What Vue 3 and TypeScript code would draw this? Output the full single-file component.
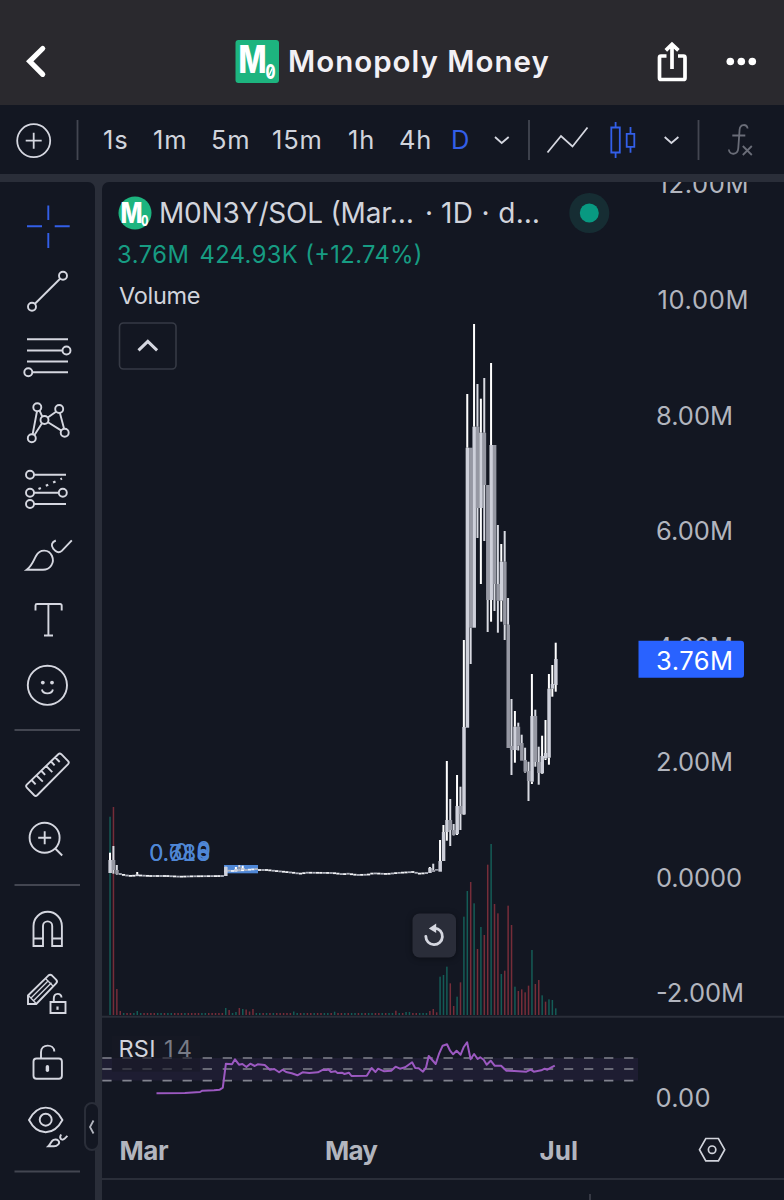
<script setup lang="ts">
type Candle = [index: number, high: number, low: number, top: number, bottom: number, up: 0 | 1]

const STEP = 3.4024
const barX = (i: number): number => 110 + i * STEP

const intervals: string[] = ['1s', '1m', '5m', '15m', '1h', '4h', 'D']

const candles: Candle[] = [
  [0, 852.7, 873, 860, 873, 1], [1, 846, 873.7, 860, 870, 0], [2, 865, 874.7, 870, 874, 0],
  [8, 872, 876, 874.5, 876, 1], [34, 866.7, 876, 867, 876, 1], [37, 867, 871, 869, 871, 1],
  [38, 865, 869.5, 867, 869, 0], [39, 865.7, 871, 868, 870, 1],
  [94, 867, 873, 868, 873, 1], [95, 863.7, 872, 870, 872, 0], [96, 869, 870.7, 869, 870.7, 0],
  [97, 840, 871.7, 861, 871.7, 1], [98, 825, 861, 832, 861, 1], [99, 761, 840.7, 820, 832, 1],
  [100, 799, 846, 820, 830, 0], [101, 824, 835.5, 830, 835, 0], [102, 775, 835, 806, 834, 1],
  [103, 786.7, 830, 806, 814, 0], [104, 640, 815, 727, 814.5, 1], [105, 394, 727.7, 447.7, 727.7, 1],
  [106, 447.7, 664, 447.7, 627.7, 0], [107, 324, 627.7, 426.7, 627.7, 1], [108, 384, 538, 426.7, 508, 0],
  [109, 398.7, 584, 432.7, 508, 1], [110, 378, 541, 432.7, 485, 0], [111, 485, 632, 485, 600, 0],
  [112, 363, 621.7, 445, 600, 1], [113, 445, 611, 445, 584, 0], [114, 525, 632.7, 584, 600.7, 0],
  [115, 544, 621.7, 561.7, 600.7, 1], [116, 531, 640, 561.7, 624.7, 0], [117, 598, 748, 624.7, 748, 0],
  [118, 699, 775, 746, 750, 0], [119, 711, 762.7, 726.7, 750, 1], [120, 722.7, 750.5, 726.7, 745.7, 0],
  [121, 734.7, 760.7, 743, 760.7, 0], [122, 747.7, 772.7, 760, 771.7, 0], [123, 761.7, 801, 771, 781, 0],
  [124, 674, 784, 716, 781.7, 1], [125, 709.7, 766.7, 716, 762, 0], [126, 746.7, 784.7, 762, 773, 0],
  [127, 735.7, 774, 756, 773.3, 1], [128, 720, 760, 753, 758.5, 1], [129, 674, 764.7, 688.7, 757.7, 1],
  [130, 665, 696.7, 684, 688.7, 1], [131, 642.7, 691.7, 659, 685, 1],
]

const baseLine: [number, number][] = [
  [117, 874], [120.7, 874], [125, 875.3], [131.7, 876], [137, 875.3], [150, 876], [167, 876], [180, 876.7],
  [193, 876.3], [224, 876], [226, 870.5], [233, 871], [246, 870], [257, 869], [258.5, 870], [267, 870],
  [273, 870.7], [283, 871.7], [293, 872.7], [300, 873.7], [307, 872.7], [333, 873], [343, 874.3],
  [348, 873.7], [357, 875], [368, 874.7], [373, 873.3], [387, 874], [397, 873], [413, 872], [420, 873.7],
  [427, 873], [437, 870.5],
]
const baseY = (x: number): number => {
  for (let k = 1; k < baseLine.length; k++) {
    const [x1, y1] = baseLine[k]
    const [x0, y0] = baseLine[k - 1]
    if (x <= x1) return y0 + ((y1 - y0) * (x - x0)) / (x1 - x0)
  }
  return 870.5
}
const flat = Array.from({ length: 91 }, (_, k) => k + 3).map((i) => ({ i, y: baseY(barX(i)), dim: (i * 7) % 5 < 2 }))

const volumeTops: Record<number, number> = {
  0: 816.7, 1: 807, 2: 989, 3: 1011, 8: 1011, 34: 1008, 35: 1010, 37: 1012, 38: 1008, 39: 1009, 40: 1009.5,
  41: 1011.5, 42: 1009, 54: 1011.5, 66: 1011.7, 84: 1010.7, 87: 1012, 88: 1012, 94: 1011, 95: 1009, 96: 1012.3,
}
const lateTops: number[] = [
  1130, 1125, 1100, 1150, 1218, 1190, 1147, 950, 873, 846, 910, 1047, 981, 1005, 794, 732, 912, 940, 1122, 1112,
  917, 975, 1160, 1173, 1168, 1177, 1157, 1050, 1152, 1140, 1186, 1205, 1198, 1200, 1225,
]
lateTops.forEach((t, k) => { volumeTops[97 + k] = 600 + t / 3 })
const sides =
  'grrrgrrgggrrrrggrggrrrgrrrrggrrrrrg' + 'rggrgrrrggrgrgrrrrrggrgrrgrrggrgrr' + 'grggrgrggrrgrggrgrggrrgggrrr' + 'ggrrrgrgrggrr'
const lateSides = 'gggrrgrggrgrgrrgrrgrrrgrrrrgrrgrggg'
const volumes = Array.from({ length: 132 }, (_, i) => ({
  x: barX(i) - 0.7,
  y: volumeTops[i] ?? 1013,
  up: (i >= 97 ? lateSides[i - 97] : i === 34 ? 'g' : i === 38 ? 'r' : sides[i % sides.length]) === 'g',
}))

const rsiRaw: number[] = [
  130, 250, 195, 249, 230, 246, 235, 242, 262, 241, 275, 239, 282, 233, 289, 161, 303, 163, 310, 148, 319, 164,
  327, 162, 336, 171, 345, 161, 355, 168, 362, 163, 378, 165, 390, 179, 400, 177, 411, 187, 419, 179, 427, 186,
  440, 190, 453, 196, 465, 187, 480, 189, 500, 187, 512, 179, 520, 180, 524, 178, 530, 186, 540, 184, 545, 189,
  555, 188, 561, 192, 571, 188, 577, 198, 612, 197, 623, 174, 632, 186, 638, 176, 652, 184, 668, 182, 678, 170,
  688, 176, 700, 172, 716, 157, 723, 174, 731, 175, 741, 185, 748, 172, 754, 138, 770, 162, 778, 130, 786, 107,
  796, 103, 803, 122, 810, 133, 818, 122, 827, 134, 834, 112, 842, 97, 850, 148, 858, 132, 866, 147, 872, 142,
  880, 149, 887, 164, 896, 152, 905, 167, 920, 167, 932, 182, 950, 183, 978, 185, 988, 179, 995, 185, 1012, 181,
  1020, 176, 1026, 179, 1034, 173, 1043, 167,
]
const rsiPoints: string = rsiRaw
  .map((v, k) => (k % 2 === 0 ? 99.8 + v / 2.2924 : 1010 + v / 3).toFixed(1))
  .join(' ')

const priceLabels: { text: string; y: number; w: number }[] = [
  { text: '12.00M', y: 193.3, w: 91 },
  { text: '10.00M', y: 308.8, w: 91 },
  { text: '8.00M', y: 424.5, w: 77 },
  { text: '6.00M', y: 539.8, w: 77 },
  { text: '4.00M', y: 655.5, w: 77 },
  { text: '2.00M', y: 771, w: 77 },
  { text: '0.0000', y: 886.7, w: 86 },
  { text: '-2.00M', y: 1002.3, w: 88 },
]
</script>

<template>
  <div class="app">
    <header class="header">
      <svg class="back" width="60" height="60" viewBox="10 32 60 60">
        <path d="M42.7 48.5 29.7 61.3 42.7 74.3" />
      </svg>
      <div class="brand">
        <svg width="44" height="44" viewBox="235 40 44 44">
          <rect x="235.5" y="40" width="43.5" height="43" rx="3" fill="#1db47f" />
          <g fill="#fff" class="logo-text">
            <text x="238.4" y="73.4" font-size="38" textLength="28" lengthAdjust="spacingAndGlyphs">M</text>
            <text x="265.6" y="79" font-size="20" textLength="10" lengthAdjust="spacingAndGlyphs">0</text>
          </g>
          <path d="M269.2 75 272.2 68.5" stroke="#fff" stroke-width="1.4" />
        </svg>
        <h1 class="title">Monopoly Money</h1>
      </div>
      <svg class="actions" width="124" height="60" viewBox="640 32 124 60">
        <path class="share" d="M666.5 56H661a1.5 1.5 0 0 0-1.5 1.5V78a1.5 1.5 0 0 0 1.5 1.5h22.500a1.500 1.500 0 0 0 1.500-1.500V57.500a1.500 1.500 0 0 0-1.500-1.500H678M672 69V45M665.800 50.300 672 44.300l6.400 6" />
        <circle cx="730.3" cy="61.500" r="3.800" /><circle cx="741.300" cy="61.500" r="3.800" /><circle cx="752.300" cy="61.500" r="3.800" />
      </svg>
    </header>

    <nav class="toolbar">
      <svg width="102" height="69" viewBox="0 105 102 69" class="ico">
        <circle cx="33.7" cy="140.700" r="16.500" /><path d="M25.700 140.700h16M33.700 132.700v16" />
        <path class="rule" d="M77.500 120v40" />
      </svg>
      <div class="intervals">
        <span v-for="item in intervals" :key="item" :class="{ active: item === 'D' }">{{ item }}</span>
      </div>
      <svg width="304" height="69" viewBox="480 105 304 69" class="ico">
        <path d="M495 137l6.700 6 7-6M664.700 137l6.700 6 7-6" />
        <path class="rule" d="M529 120v40M698.500 120v40" />
        <path d="M547.500 152.500 561 136l11.500 10.500L587.500 127.500" />
        <path class="blue" d="M611.300 127.500h8.500v25h-8.500zM615.600 122v5.500M615.600 152.500v5.500M626.700 133.800h7.600v13h-7.600zM630.500 127v6.800M630.500 146.800v6" />
        <path class="fx" d="M747.600 128.500C747 124 740.200 123.400 739.600 129.500L738.300 148C737.800 155.300 729.500 155.500 728.800 149.500M732.300 135.500h13M742.800 146l9 9M751.800 146l-9 9" />
      </svg>
    </nav>

    <div class="workspace">
      <aside class="sidebar">
        <svg width="95" height="1018" viewBox="0 182 95 1018" class="ico tools">
          <path class="blue" d="M48.300 205.500V220M48.300 233v15M27 226.300h15M54.700 226.300h15" />

          <path d="M34.700 304 60.300 278.500" /><circle cx="63" cy="275.700" r="4" /><circle cx="32" cy="306.700" r="4" />

          <path d="M27 339.300h41M27 350.500h35.500M27 361.500h41M32.500 372.300H68" />
          <circle cx="66.500" cy="350.500" r="4" /><circle cx="28.300" cy="372.300" r="4" />

          <path d="M37 411.200 32.600 434.500M39.500 410.500 42.300 416.700M47.800 417.500l8.200-5.800M59.900 413l4.200 15.700M48 422.200l13.400 8.400M42 423.200l-7.700 12" />
          <circle cx="37.300" cy="407.200" r="4" /><circle cx="59.200" cy="409" r="4" /><circle cx="44.500" cy="420" r="4" />
          <circle cx="31.800" cy="438.300" r="4" /><circle cx="64.700" cy="432.700" r="4" />

          <path d="M34 474.700h32M34 492.800h24.700M34 504h32" />
          <circle cx="30" cy="474.700" r="4" /><circle cx="30" cy="492.800" r="4" /><circle cx="62.800" cy="492.800" r="4" /><circle cx="30" cy="504" r="4" />
          <path class="dots" d="M38.500 489 62 478.600" />

          <path d="M26.700 569.800C32 566 33.500 560.500 36 556c4-7.500 13-6.800 16 0 3 7-2 13.800-9 13.800z" />
          <path d="M55.800 540.500c-4.300 1.700-5 5.200-2.600 8.200l2.400 2.400c2.200 1.800 4.200 1.600 6.200-.200L71.800 540.300" />

          <path d="M35.500 610.500v-5a1.500 1.500 0 0 1 1.500-1.500h23.200a1.500 1.500 0 0 1 1.500 1.500v5M48.400 604v31.500M44 635.500h9" />

          <circle cx="47.400" cy="685.300" r="19.600" /><path d="M41.900 689.500c1.200 5.200 9.800 5.200 11 0" />
          <g class="solid"><circle cx="42.800" cy="682.600" r="1.900" /><circle cx="52" cy="682.600" r="1.900" /></g>

          <path class="rule" d="M14.500 730H80M14.500 885H80M14.500 1171.500H80" />

          <path d="M58.300 754.200q1.500-1.400 3 0l6.800 6.900q1.400 1.500 0 3L37.200 795.200q-1.500 1.400-3 0l-7.400-7.600q-1.400-1.500 0-3zM32 780.500l3.600 3.800M36.800 775.800l6 5.800M41.500 771l3.600 3.800M46.300 766.200l6 6M51 761.500l3.600 3.800M55.200 757.500l4.500 4.500" />

          <circle cx="44.600" cy="837.700" r="15" /><path d="M38.200 837.700h13M44.700 831.200v13M55.200 848.500l7 7" />

          <path d="M33.500 946v-20a14.200 14.200 0 0 1 28.400 0v20h-9.700v-20a4.600 4.600 0 0 0-9.200 0v20zM33.500 938.500h9.500M52.300 938.500h9.600" />

          <path d="M28 1004v-8.500L48.300 975.600q1.900-1.600 3.800 0l4 4q1.800 1.900 0 3.800L36.300 1004z" />
          <path class="thin" d="M28.400 995.500l8 8.300M31 998 48.500 980.500M33.500 1000.800 51.500 982.800M45.500 978.500l8 8" />
          <path class="cut" d="M50.500 1002h15v11h-15zM53.800 1002v-3.500c0-6 7.700-6 7.700-1" /><path class="thick" d="M57.500 1006.500v3.300" />

          <rect x="33.500" y="1058.500" width="28.400" height="20.200" rx="3" /><path d="M41 1058.500v-6.300c0-8.700 13-8.700 13.300-.700" /><path class="lock" d="M47.400 1066.800v3.500" />

          <path d="M29 1120c8.500-16.500 24.800-16.500 33.400 0-8.600 16.300-24.900 16.300-33.400 0z" /><circle cx="45.700" cy="1119.700" r="6" />
          <path d="M48.300 1146.300c2.500-2.300 2.700-5.300 5.200-6.500 4.300-1.300 7 2 4.800 4.600-1.400 1.500-2.800 1.900-4.300 1.900zM61.200 1134.500c-2.500 3.500.300 6.800 3.200 4.300l3-3" />
        </svg>
      </aside>

      <main class="chart">
        <svg width="682" height="1018" viewBox="102 182 682 1018">
          <g fill-opacity="0.6">
            <rect v-for="(v, k) in volumes" :key="k" :x="v.x" :y="v.y" width="1.5" :height="1015 - v.y" :fill="v.up ? '#168a79' : '#b93c49'" />
          </g>

          <g class="fib">
            <text x="149" y="861" textLength="61.500">0.786</text>
            <text x="149" y="861" textLength="61.500">0.618</text>
            <text x="174" y="859.500" textLength="36.500">0.5</text>
            <text x="196.500" y="858">0</text>
          </g>
          <rect x="224" y="865" width="34" height="8.300" fill="#4f87d6" />

          <rect v-for="f in flat" :key="'f' + f.i" :x="barX(f.i) - 1.700" :y="f.y - 0.900" width="3.300" height="1.800" :fill="f.dim ? '#b4b7c1' : '#f0f1f5'" />

          <g v-for="c in candles" :key="c[0]">
            <rect :x="barX(c[0]) - 1.600" :y="c[3]" width="3.500" :height="c[4] - c[3]" :fill="c[5] ? '#ced0da' : '#9698a3'" />
            <rect :x="barX(c[0]) - 1" :y="c[1]" width="2" :height="Math.max(0, c[3] - c[1])" :fill="c[5] ? '#fff' : '#d8dae2'" />
            <rect :x="barX(c[0]) - 1" :y="c[4]" width="2" :height="Math.max(0, c[2] - c[4])" :fill="c[5] ? '#fff' : '#d8dae2'" />
          </g>

          <g class="legend">
            <circle cx="135" cy="213" r="16.500" fill="#1db47f" />
            <g class="logo-text" fill="#fff">
              <text x="120.500" y="222.500" font-size="29" textLength="22" lengthAdjust="spacingAndGlyphs">M</text>
              <text x="141" y="225.500" font-size="14" textLength="7.500" lengthAdjust="spacingAndGlyphs">0</text>
            </g>
            <text x="159" y="223.300" font-size="28" textLength="255">M0N3Y/SOL (Mar…</text>
            <text x="425" y="223.300" font-size="28">·</text>
            <text x="441" y="223.300" font-size="28" textLength="99">1D · d…</text>
            <g fill="#179c83" font-size="23.700">
              <text x="117" y="262.500" textLength="72">3.76M</text>
              <text x="199.500" y="262.500" textLength="223">424.93K (+12.74%)</text>
            </g>
            <text x="119" y="303.500" font-size="23.500" textLength="81.500">Volume</text>
          </g>
          <circle cx="589.300" cy="213" r="20" fill="#162d33" /><circle cx="589.300" cy="213" r="9.500" fill="#089981" />

          <rect x="119.500" y="323" width="56.500" height="46" rx="4" fill="none" stroke="#363a45" stroke-width="1.600" />
          <path class="caret" d="M138.500 350.300 147.800 341.300l9.300 9" />

          <g class="replay">
            <rect x="412.500" y="913.500" width="43.500" height="44" rx="7" fill="#2a2d39" />
            <path d="M425.800 936.300a8.300 8.300 0 1 0 9-8.200" fill="none" stroke="#d5d7e0" stroke-width="2.800" stroke-linecap="round" />
            <path d="M428.800 928.600l7.400-5.200v9.600z" fill="#d5d7e0" />
          </g>

          <g class="axis">
            <text v-for="p in priceLabels" :key="p.text" :x="p.text.startsWith('1') ? 657.5 : 656" :y="p.y" :textLength="p.w">{{ p.text }}</text>
            <text x="655.500" y="1106.800" textLength="55">0.00</text>
          </g>
          <path d="M638.500 640.800H741a3 3 0 0 1 3 3v31a3 3 0 0 1-3 3H638.500z" fill="#2962ff" />
          <text x="656" y="669.500" font-size="25.500" textLength="77" fill="#fff">3.76M</text>

          <path d="M102 1016.800h682M102 1179h682" stroke="#2a2e39" stroke-width="2" />
          <path d="M590 1194v6" stroke="#434651" stroke-width="1.500" />

          <rect x="102" y="1058" width="536" height="22.500" fill="#1e1d32" />
          <path class="dash" d="M102.300 1058H636M102.300 1069H636M102.300 1080.700H636" />
          <rect x="112" y="1036" width="88" height="35.500" fill="#171925" opacity="0.6" />
          <text x="118.500" y="1057.300" font-size="23.500" textLength="37" fill="#d1d4dc">RSI</text>
          <text x="164" y="1057.300" font-size="23.500" textLength="28" fill="#787b86">14</text>
          <polyline :points="rsiPoints" fill="none" stroke="#9c59c1" stroke-width="2" stroke-linejoin="round" />

          <g class="months">
            <text x="119.500" y="1159.500" textLength="49">Mar</text>
            <text x="325" y="1159.500" textLength="53">May</text>
            <text x="539.500" y="1159.500" textLength="38.500">Jul</text>
          </g>
          <path d="M705.800 1138.500h12.600l6.300 11.200-6.300 11.200h-12.600l-6.300-11.200z" fill="none" stroke="#d1d4dc" stroke-width="1.700" />
          <circle cx="712.100" cy="1149.700" r="3.700" fill="none" stroke="#d1d4dc" stroke-width="1.700" />
        </svg>
      </main>

      <div class="handle">
        <svg width="12" height="20" viewBox="0 0 12 20"><path d="M7.500 3.500 4 10l3.500 6.500" /></svg>
      </div>
    </div>
  </div>
</template>

<style>
body {
  background: #131722;
}
</style>

<style scoped>
.app {
  display: flex;
  flex-direction: column;
  width: 784px;
  height: 1200px;
  overflow: hidden;
  background: #131722;
  color: #d1d4dc;
  font-family: Inter, 'Liberation Sans', sans-serif;
}
svg {
  display: block;
  flex: none;
}
.header {
  display: flex;
  align-items: center;
  justify-content: space-between;
  box-sizing: border-box;
  height: 105px;
  padding: 19px 20px 0 10px;
  background: #2a292e;
}
.back path {
  fill: none;
  stroke: #fff;
  stroke-width: 5.2;
  stroke-linecap: round;
}
.brand {
  display: flex;
  align-items: center;
  gap: 9px;
  width: 315px;
  margin-left: 75px;
}
.title {
  margin: 0;
  color: #f2f0f5;
  font-size: 29.5px;
  font-weight: 600;
  letter-spacing: 1px;
  line-height: 42px;
  padding-bottom: 2px;
  white-space: nowrap;
}
.actions {
  fill: #fff;
}
.share {
  fill: none;
  stroke: #fff;
  stroke-width: 3.7;
}
.logo-text text {
  font-weight: 800;
}
.toolbar {
  display: flex;
  height: 69px;
}
.ico {
  fill: none;
  stroke: #d5d7e0;
  stroke-width: 1.8;
}
.ico .rule {
  stroke: #434651;
  stroke-width: 1.8;
}
.ico .blue {
  stroke: #335fe8;
}
.ico .fx {
  stroke: #6a6d78;
}
.intervals {
  display: grid;
  grid-template-columns: 50px 58px 61px 76px 51px 52px 28px;
  width: 377px;
  padding-left: 1px;
  line-height: 70px;
  font-size: 25.5px;
  letter-spacing: 0.8px;
}
.intervals .active {
  color: #335fe8;
}
.workspace {
  position: relative;
  display: grid;
  grid-template-columns: 95px 682px;
  column-gap: 7px;
  padding-top: 8px;
  background: #2a2e39;
}
.sidebar {
  overflow: hidden;
  border-top-right-radius: 7px;
  background: #131722;
}
.chart {
  overflow: hidden;
  border-top-left-radius: 7px;
  background: #131722;
}
.tools {
  stroke-width: 1.9;
}
.tools .solid {
  fill: #d5d7e0;
  stroke: none;
}
.tools .dots {
  stroke-width: 2.2;
  stroke-dasharray: 2.6 5.4;
}
.tools .cut {
  fill: #131722;
}
.tools .thin {
  stroke-width: 1.3;
}
.tools .thick {
  stroke-width: 2.2;
}
.tools .lock {
  stroke-width: 3.4;
  stroke-linecap: round;
}
.handle {
  position: absolute;
  left: 84px;
  top: 928px;
  display: flex;
  align-items: center;
  justify-content: center;
  box-sizing: border-box;
  width: 16px;
  height: 49px;
  border: 2px solid #2a2e39;
  border-radius: 8px;
  background: #131722;
}
.handle path {
  fill: none;
  stroke: #b2b5be;
  stroke-width: 1.8;
}
.legend {
  fill: #d1d4dc;
}
.fib {
  fill: #4f87d6;
  font-size: 22.5px;
  font-variant-numeric: tabular-nums;
}
.caret {
  fill: none;
  stroke: #d5d7e0;
  stroke-width: 3;
}
.replay {
  filter: drop-shadow(0 1px 3px rgba(0, 0, 0, 0.4));
}
.axis {
  fill: #b2b5be;
  font-size: 25.5px;
}
.months {
  fill: #b2b5be;
  font-size: 26px;
  font-weight: 650;
}
.dash {
  fill: none;
  stroke: #82848f;
  stroke-width: 1.7;
  stroke-dasharray: 9.3 10.77;
}
</style>
